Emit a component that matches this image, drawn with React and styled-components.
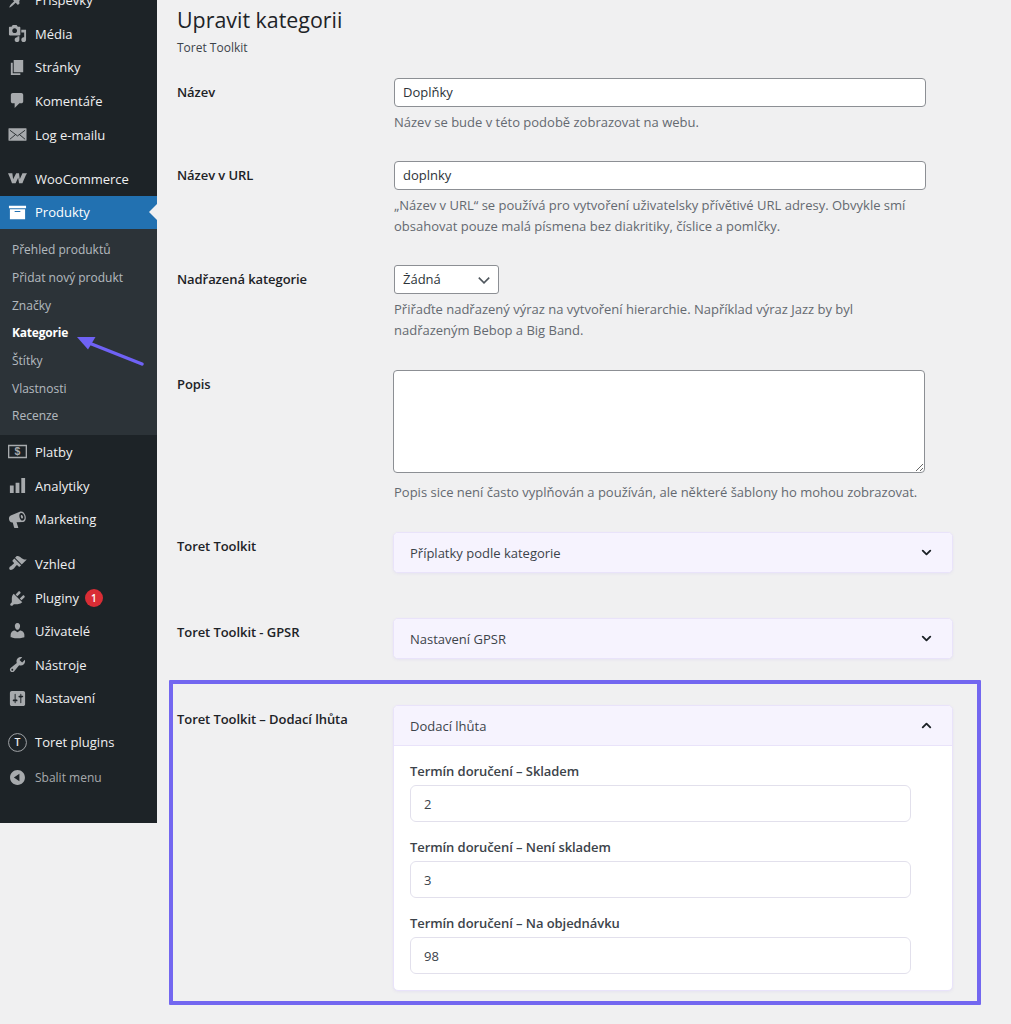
import React from 'react';
import styled, { createGlobalStyle } from 'styled-components';
import { ChevronDown, ChevronUp } from 'lucide-react';

const FONT = `'Open Sans', 'Noto Sans', sans-serif`;

const GlobalStyle = createGlobalStyle`
    html, body {
        margin: 0;
        height: 1024px;
        overflow: hidden;
        background: #f0f0f1;
    }
    body {
        font-family: ${FONT};
        font-size: 13px;
        color: #3c434a;
    }
`;

// --- dashboard icons ---
const icons = {
    post: <path d="M10.44 3.02l1.82-1.82 6.36 6.35-1.83 1.82c-1.05-.68-2.48-.57-3.41.36l-.75.75c-.92.93-1.04 2.35-.35 3.41l-1.83 1.82-2.41-2.41-2.8 2.79c-.42.42-3.38 2.71-3.8 2.29s1.86-3.39 2.28-3.81l2.79-2.79L4.1 9.36l1.83-1.82c1.05.69 2.48.57 3.4-.36l.75-.75c.93-.92 1.05-2.35.36-3.41z" />,
    media: <path d="M13 11V4c0-.55-.45-1-1-1h-1.67L9 1H5L3.67 3H2c-.55 0-1 .45-1 1v7c0 .55.45 1 1 1h10c.55 0 1-.45 1-1zM7 4.5c1.38 0 2.5 1.12 2.5 2.5S8.38 9.5 7 9.5 4.5 8.38 4.5 7 5.62 4.5 7 4.5zM14 6h5v10.5c0 1.38-1.12 2.5-2.5 2.5S14 17.88 14 16.5s1.12-2.5 2.5-2.5c.17 0 .34.02.5.05V9h-3V6zm-4 8.05V13h2v3.5c0 1.38-1.12 2.5-2.5 2.5S7 17.88 7 16.5 8.12 14 9.5 14c.17 0 .34.02.5.05z" fillRule="evenodd" />,
    page: <path d="M6 15V2h10v13H6zm-1 1h8v2H3V5h2v11z" />,
    comments: <path d="M5 2h9c1.1 0 2 .9 2 2v7c0 1.1-.9 2-2 2h-2l-5 5v-5H5c-1.1 0-2-.9-2-2V4c0-1.1.9-2 2-2z" />,
    email: (
        <>
            <rect x="0.5" y="3.5" width="19" height="13" rx="0.5" />
            <path d="M2 5.5l8 6 8-6M2 15l6-5M18 15l-6-5" fill="none" stroke="#1d2327" strokeWidth="0.9" />
        </>
    ),
    woo: <path d="M0 4.5h4.6l.8 6.4L8.6 4.5h3l.8 6.4 2.8-6.4H20c-1.9 3.2-3.4 7-4.8 10.5h-3.6l-.9-5.8L8 15H4.2C3.1 11.4 1.6 7.8 0 4.5z" />,
    archive: <path d="M19 3v2.4H1V3h18zM2 6.6h16V17H2V6.6zm11 3V8.4H7v1.2h6z" fillRule="evenodd" />,
    money: (
        <>
            <path d="M0 3h20v14H0zM1.4 4.4v11.2h17.2V4.4z" fillRule="evenodd" />
            <text x="10" y="14.2" fontSize="11" fontWeight="700" textAnchor="middle" fontFamily="'Liberation Sans', sans-serif">$</text>
        </>
    ),
    chart: <path d="M18 18V2h-4v16h4zm-6 0V7H8v11h4zm-6 0v-8H2v8h4z" />,
    megaphone: <path d="M13 1.6c2.6-.7 4.6 1.6 5.4 4.5.8 2.9.2 5.9-2.4 6.6l-7 .2 1.8 5.4c.1.3-.1.7-.5.7H7c-.3 0-.5-.2-.6-.5L5 13.2c-2 .3-3.3-1-3.8-2.9-.5-1.9 0-3.6 1.7-4.5zm.6 1.6c-1.6.4-2 2.5-1.4 4.6.6 2.1 2 3.7 3.6 3.2 1.6-.4 2-2.5 1.4-4.6-.6-2.1-2-3.6-3.6-3.2zm.2 2c.9-.2 1.6.5 1.9 1.6.3 1.1 0 2-.9 2.3-.5-.2-1-1-1.3-2-.2-.8-.1-1.5.3-1.9z" fillRule="evenodd" />,
    appearance: <path d="M14.48 11.06L7.41 3.99l1.5-1.5c.5-.56 2.3-.47 3.51.32 1.21.8 1.43 1.28 2.91 2.1 1.18.64 2.45 1.26 4.45.85zm-.71.71L6.7 4.7 4.93 6.47c-.39.39-.39 1.02 0 1.41l1.06 1.06c.39.39.39 1.03 0 1.42-.6.6-1.43 1.11-2.21 1.69-.35.26-.7.53-1.01.84C1.43 13.23.78 15.4 1.72 16.34s3.11.28 4.45-1.06c.31-.31.58-.66.84-1.01.58-.78 1.09-1.61 1.69-2.21.39-.39 1.03-.39 1.42 0l1.06 1.06c.39.39 1.02.39 1.41 0z" />,
    plugins: <path d="M13.11 4.36L9.87 7.6 8 5.73l3.24-3.24c.35-.34 1.05-.2 1.56.32.52.51.66 1.21.31 1.55zm-8 1.77l.91-1.12 9.01 9.01-1.19.84c-.71.71-2.63 1.16-3.82 1.16H6.14L4.9 17.26c-.59.59-1.54.59-2.12 0-.59-.58-.59-1.53 0-2.12l1.24-1.24v-3.88c0-1.13.4-3.19 1.09-3.89zm7.26 3.97l3.24-3.24c.34-.35 1.04-.21 1.55.31.52.51.66 1.21.31 1.55l-3.24 3.25z" />,
    users: <path d="M10 9.25c-2.27 0-2.73-3.44-2.73-3.44C7 4.02 7.82 2 9.97 2c2.16 0 2.98 2.02 2.71 3.81 0 0-.41 3.44-2.68 3.44zm0 2.57L12.72 10c2.39 0 4.52 2.33 4.52 4.53v2.49s-3.65 1.13-7.24 1.13c-3.65 0-7.24-1.13-7.24-1.13v-2.49c0-2.25 1.94-4.48 4.47-4.48z" />,
    tools: <path d="M16.68 9.77c-1.34 1.34-3.3 1.67-4.95.99l-5.41 6.52c-.99.99-2.59.99-3.58 0s-.99-2.59 0-3.57l6.52-5.42c-.68-1.65-.35-3.61.99-4.95 1.28-1.28 3.12-1.62 4.72-1.06l-2.89 2.89 2.82 2.82 2.86-2.87c.53 1.58.18 3.39-1.08 4.65zM3.81 16.21c.4.39 1.04.39 1.43 0 .4-.4.4-1.04 0-1.43-.39-.4-1.03-.4-1.43 0-.39.39-.39 1.03 0 1.43z" fillRule="evenodd" />,
    settings: <path d="M18 16V4c0-1.1-.9-2-2-2H4c-1.1 0-2 .9-2 2v12c0 1.1.9 2 2 2h12c1.1 0 2-.9 2-2zM8 11h1c.55 0 1 .45 1 1s-.45 1-1 1H8v1.5c0 .28-.22.5-.5.5s-.5-.22-.5-.5V13H6c-.55 0-1-.45-1-1s.45-1 1-1h1V5.5c0-.28.22-.5.5-.5s.5.22.5.5V11zm5-2h-1c-.55 0-1-.45-1-1s.45-1 1-1h1V5.5c0-.28.22-.5.5-.5s.5.22.5.5V7h1c.55 0 1 .45 1 1s-.45 1-1 1h-1v5.5c0 .28-.22.5-.5.5s-.5-.22-.5-.5V9z" fillRule="evenodd" />,
    toret: (
        <>
            <circle cx="10" cy="10" r="9.4" fill="none" stroke="currentColor" strokeWidth="1" />
            <text x="10" y="14" fontSize="11" fontWeight="600" textAnchor="middle" fill="#f0f0f1" fontFamily="'Open Sans', sans-serif">T</text>
        </>
    ),
    collapse: <path d="M10 2.16c4.33 0 7.84 3.51 7.84 7.84s-3.51 7.84-7.84 7.84S2.16 14.33 2.16 10 5.71 2.16 10 2.16zm2 11.72V6.12L6.18 9.97z" fillRule="evenodd" />,
};

const Icon = ({ name }) => (
    <IconSvg viewBox="0 0 20 20" fill="currentColor" aria-hidden="true">{icons[name]}</IconSvg>
);

const MenuGroup = ({ items }) => (
    <MenuList>
        {items.map((item) => (
            <MenuItem key={item.label} $nudge={!!item.badge}>
                <Icon name={item.icon} />
                <MenuLabel>{item.label}</MenuLabel>
                {item.badge && <Badge>{item.badge}</Badge>}
            </MenuItem>
        ))}
    </MenuList>
);

const Sidebar = () => (
    <Side>
        <MenuGroup items={[
            { icon: 'post', label: 'Příspěvky' },
            { icon: 'media', label: 'Média' },
            { icon: 'page', label: 'Stránky' },
            { icon: 'comments', label: 'Komentáře' },
            { icon: 'email', label: 'Log e-mailu' },
        ]} />
        <Separator />
        <MenuItem>
            <Icon name="woo" />
            <MenuLabel>WooCommerce</MenuLabel>
        </MenuItem>
        <MenuItem $current>
            <Icon name="archive" />
            <MenuLabel>Produkty</MenuLabel>
        </MenuItem>
        <SubMenu>
            <SubItem>Přehled produktů</SubItem>
            <SubItem>Přidat nový produkt</SubItem>
            <SubItem>Značky</SubItem>
            <SubItem $active>Kategorie</SubItem>
            <SubItem>Štítky</SubItem>
            <SubItem>Vlastnosti</SubItem>
            <SubItem>Recenze</SubItem>
            <ArrowMark viewBox="0 0 72 32" aria-hidden="true">
                <path d="M14 9L67 30" stroke="#6f62f5" strokeWidth="3.4" strokeLinecap="round" fill="none" />
                <path d="M2 3h18.5l-7.5 12.5z" fill="#6f62f5" />
            </ArrowMark>
        </SubMenu>
        <MenuGroup items={[
            { icon: 'money', label: 'Platby' },
            { icon: 'chart', label: 'Analytiky' },
            { icon: 'megaphone', label: 'Marketing' },
        ]} />
        <Separator />
        <MenuGroup items={[
            { icon: 'appearance', label: 'Vzhled' },
            { icon: 'plugins', label: 'Pluginy', badge: 1 },
            { icon: 'users', label: 'Uživatelé' },
            { icon: 'tools', label: 'Nástroje' },
            { icon: 'settings', label: 'Nastavení' },
        ]} />
        <Separator />
        <MenuItem>
            <Icon name="toret" />
            <MenuLabel>Toret plugins</MenuLabel>
        </MenuItem>
        <CollapseItem>
            <Icon name="collapse" />
            <CollapseLabel>Sbalit menu</CollapseLabel>
        </CollapseItem>
    </Side>
);

const App = () => (
    <>
        <GlobalStyle />
        <Layout>
            <Sidebar />
            <Main>
                <Title>Upravit kategorii</Title>
                <Subtitle>Toret Toolkit</Subtitle>

                <Row $top={21}>
                    <RowLabel>Název</RowLabel>
                    <div>
                        <TextInput defaultValue="Doplňky" />
                        <Hint>Název se bude v této podobě zobrazovat na webu.</Hint>
                    </div>
                </Row>
                <Row $top={28}>
                    <RowLabel>Název v URL</RowLabel>
                    <div>
                        <TextInput defaultValue="doplnky" />
                        <Hint>„Název v URL“ se používá pro vytvoření uživatelsky přívětivé URL adresy. Obvykle smí obsahovat pouze malá písmena bez diakritiky, číslice a pomlčky.</Hint>
                    </div>
                </Row>
                <Row $top={28}>
                    <RowLabel>Nadřazená kategorie</RowLabel>
                    <div>
                        <ParentSelect defaultValue="none">
                            <option value="none">Žádná</option>
                        </ParentSelect>
                        <Hint>Přiřaďte nadřazený výraz na vytvoření hierarchie. Například výraz Jazz by byl nadřazeným Bebop a Big Band.</Hint>
                    </div>
                </Row>
                <Row $top={29}>
                    <RowLabel>Popis</RowLabel>
                    <div>
                        <DescriptionArea />
                        <Hint $gap={9}>Popis sice není často vyplňován a používán, ale některé šablony ho mohou zobrazovat.</Hint>
                    </div>
                </Row>
                <Row $top={29}>
                    <RowLabel>Toret Toolkit</RowLabel>
                    <Card>
                        <CardHeader $closed>
                            Příplatky podle kategorie
                            <ChevronDown size={15} strokeWidth={3} color="#1d2327" />
                        </CardHeader>
                    </Card>
                </Row>
                <Row $top={45}>
                    <RowLabel>Toret Toolkit - GPSR</RowLabel>
                    <Card>
                        <CardHeader $closed>
                            Nastavení GPSR
                            <ChevronDown size={15} strokeWidth={3} color="#1d2327" />
                        </CardHeader>
                    </Card>
                </Row>
                <Highlight>
                    <Row>
                        <RowLabel>Toret Toolkit – Dodací lhůta</RowLabel>
                        <Card>
                            <CardHeader>
                                Dodací lhůta
                                <ChevronUp size={15} strokeWidth={3} color="#1d2327" />
                            </CardHeader>
                            <CardBody>
                                <Field>
                                    <FieldLabel>Termín doručení – Skladem</FieldLabel>
                                    <FieldInput defaultValue="2" />
                                </Field>
                                <Field>
                                    <FieldLabel>Termín doručení – Není skladem</FieldLabel>
                                    <FieldInput defaultValue="3" />
                                </Field>
                                <Field>
                                    <FieldLabel>Termín doručení – Na objednávku</FieldLabel>
                                    <FieldInput defaultValue="98" />
                                </Field>
                            </CardBody>
                        </Card>
                    </Row>
                </Highlight>
            </Main>
        </Layout>
    </>
);

export default App;

// --- LAYOUT ---

const Layout = styled.div`
    display: flex;
    align-items: flex-start;
    height: 1024px;
    overflow: hidden;
`;

// --- SIDEBAR ---

const Side = styled.nav`
    flex: 0 0 157px;
    height: 840px;
    margin-top: -17px;
    background: #1d2327;
    color: #f0f0f1;
`;

const MenuList = styled.div`
    display: flex;
    flex-direction: column;
`;

const Separator = styled.div`
    height: 10.5px;
`;

const MenuItem = styled.div`
    position: relative;
    display: flex;
    align-items: center;
    box-sizing: border-box;
    height: 33.7px;
    padding-left: 8px;
    padding-top: ${(p) => (p.$nudge ? 2 : 0)}px;
    font-size: 13px;
    color: ${(p) => (p.$current ? '#fff' : '#f0f0f1')};
    background: ${(p) => (p.$current ? '#2271b1' : 'transparent')};

    svg { color: ${(p) => (p.$current ? '#fff' : '#a7aaad')}; }

    ${(p) => p.$current && `
        &::after {
            content: "";
            position: absolute;
            right: 0;
            top: 50%;
            margin-top: -8px;
            border: 8px solid transparent;
            border-right-color: #f0f0f1;
        }
    `}
`;

const CollapseItem = styled(MenuItem)`
    margin-top: 1.5px;
`;

const IconSvg = styled.svg`
    flex: 0 0 19px;
    width: 19px;
    height: 19px;
    margin-right: 8px;
`;

const MenuLabel = styled.span`
    white-space: nowrap;
`;

const CollapseLabel = styled(MenuLabel)`
    font-size: 12px;
    color: #a7aaad;
`;

const Badge = styled.span`
    display: inline-flex;
    align-items: center;
    justify-content: center;
    width: 18px;
    height: 18px;
    margin-left: 6px;
    border-radius: 50%;
    background: #d92d35;
    color: #fff;
    font-size: 10px;
    font-weight: 600;
`;

const SubMenu = styled.div`
    position: relative;
    display: flex;
    flex-direction: column;
    padding: 6.5px 0 5.5px;
    background: #2c3338;
`;

const SubItem = styled.div`
    display: flex;
    align-items: center;
    height: 27.7px;
    padding-left: 12px;
    font-size: 12px;
    white-space: nowrap;
    color: ${(p) => (p.$active ? '#fff' : 'rgba(240, 246, 252, 0.7)')};
    font-weight: ${(p) => (p.$active ? 700 : 400)};
    letter-spacing: ${(p) => (p.$active ? '-0.2px' : '0')};
`;

const ArrowMark = styled.svg`
    position: absolute;
    left: 75px;
    top: 105px;
    width: 72px;
    height: 32px;
`;

// --- FORM ---

const Main = styled.main`
    flex: 1;
    min-width: 0;
    padding: 5px 0 0 20px;
`;

const Title = styled.h1`
    margin: 0;
    font-size: 21.4px;
    font-weight: 400;
    line-height: 30px;
    color: #1d2327;
`;

const Subtitle = styled.p`
    margin: 4px 0 0;
    font-size: 12px;
    line-height: 18px;
    color: #3c434a;
`;

const Row = styled.section`
    display: grid;
    grid-template-columns: 216px 560px;
    margin-top: ${(p) => p.$top || 0}px;
`;

const RowLabel = styled.label`
    padding-top: 4px;
    font-size: 13px;
    line-height: 20px;
    font-weight: 600;
    letter-spacing: -0.07px;
    color: #1d2327;
`;

const TextInput = styled.input`
    display: block;
    box-sizing: border-box;
    width: 532px;
    height: 29px;
    margin-left: 1px;
    padding: 0 8px 1px;
    border: 1px solid #8c8f94;
    border-radius: 4px;
    background: #fff;
    font: 13px/1 ${FONT};
    color: #2c3338;
    outline: none;
`;

const ParentSelect = styled.select`
    display: block;
    box-sizing: border-box;
    width: 105px;
    height: 29px;
    margin-left: 1px;
    padding: 0 24px 0 8px;
    border: 1px solid #8c8f94;
    border-radius: 3px;
    appearance: none;
    background: #fff url("data:image/svg+xml;utf8,<svg xmlns='http://www.w3.org/2000/svg' width='20' height='20'><path d='M3.5 7l6.5 6.5L16.500 7' fill='none' stroke='%2350575e' stroke-width='2'/></svg>") no-repeat right 6px top 55%;
    background-size: 16px 16px;
    font: 13px/1 ${FONT};
    color: #2c3338;
`;

const DescriptionArea = styled.textarea`
    display: block;
    box-sizing: border-box;
    width: 532px;
    height: 103px;
    padding: 2px 6px;
    border: 1px solid #8c8f94;
    border-radius: 4px;
    background: #fff;
    font: 13px/1.4 ${FONT};
    outline: none;
`;

const Hint = styled.p`
    width: 532px;
    margin: ${(p) => p.$gap || 5}px 0 0 1px;
    font-size: 13px;
    line-height: 21px;
    color: #646970;
`;

const Highlight = styled.div`
    width: 812px;
    box-sizing: border-box;
    margin: 21px 0 0 -8px;
    padding: 21px 0 10px 4px;
    border: 4px solid #7367f0;
    border-radius: 1px;
`;

const Card = styled.div`
    box-sizing: border-box;
    width: 560px;
    border: 1px solid #e9e3fa;
    border-radius: 5px;
    background: #fff;
    box-shadow: 0 1px 3px rgba(110, 90, 220, 0.08);
    overflow: hidden;
`;

const CardHeader = styled.div`
    display: flex;
    align-items: center;
    justify-content: space-between;
    box-sizing: border-box;
    height: ${(p) => (p.$closed ? 39 : 40)}px;
    padding: 0 18px 0 16px;
    background: #f6f3fe;
    border-bottom: ${(p) => (p.$closed ? 'none' : '1px solid #e9e3fa')};
    font-size: 13px;
    color: #3c434a;
`;

const CardBody = styled.div`
    display: flex;
    flex-direction: column;
    gap: 16px;
    padding: 16px 41px 16px 16px;
`;

const Field = styled.div`
    display: flex;
    flex-direction: column;
    gap: 5px;
`;

const FieldLabel = styled.label`
    font-size: 13px;
    line-height: 18px;
    font-weight: 600;
    letter-spacing: -0.07px;
    color: #3c434a;
`;

const FieldInput = styled.input`
    box-sizing: border-box;
    width: 501px;
    height: 37px;
    padding: 0 13px;
    border: 1.5px solid #e2e0ec;
    border-radius: 6px;
    background: #fff;
    font: 13px/1 ${FONT};
    color: #3c434a;
    outline: none;
`;
